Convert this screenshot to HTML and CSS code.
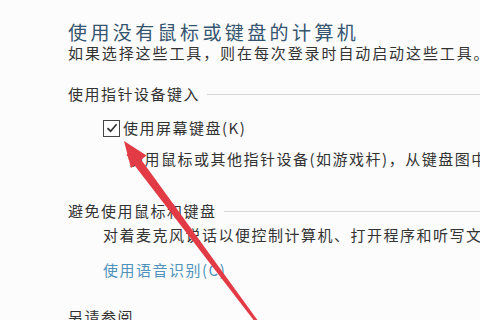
FILE: index.html
```html
<!DOCTYPE html>
<html lang="zh-CN">
<head>
    <meta charset="UTF-8">
    <meta name="viewport" content="width=device-width, initial-scale=1.0">
    <title>使用没有鼠标或键盘的计算机</title>
    <link rel="stylesheet" href="styles.css">
</head>
<body>
    <div class="page">
        <h1 class="title">使用没有鼠标或键盘的计算机</h1>
        <p class="intro">如果选择这些工具，则在每次登录时自动启动这些工具。</p>

        <div class="group group-pointer">
            <div class="group-head"><span>使用指针设备键入</span><i class="rule"></i></div>
            <label class="check-row">
                <span class="checkbox">
                    <svg width="14" height="14" viewBox="0 0 14 14"><path d="M2.5 7.2 L5.6 10.2 L11.6 3.2" fill="none" stroke="#333" stroke-width="1.7"/></svg>
                </span>
                <span>使用屏幕键盘(K)</span>
            </label>
            <p class="desc desc-indent">使用鼠标或其他指针设备(如游戏杆)，从键盘图中选择</p>
        </div>

        <div class="group group-speech">
            <div class="group-head"><span>避免使用鼠标和键盘</span><i class="rule"></i></div>
            <p class="desc">对着麦克风说话以便控制计算机、打开程序和听写文本</p>
            <a class="link" href="#">使用语音识别(C)</a>
        </div>

        <div class="group group-see">
            <div class="group-head"><span>另请参阅</span></div>
        </div>

        <!-- annotation arrow drawn over the screenshot -->
        <svg class="arrow" width="480" height="320" viewBox="0 0 480 320">
            <polygon points="133.6,149.3 126.4,154.7 255.8,322.9 258.2,321.1" fill="#e23b46"/>
            <polygon points="124,141 146.5,155.5 131,168" fill="#e23b46"/>
        </svg>
    </div>
</body>
</html>
```

FILE: styles.css
```css
body {
    margin: 0;
    background-color: #fcfcfc;
    font-family: "Noto Sans CJK SC", "Noto Sans", sans-serif;
    color: #333;
    overflow: hidden;
}

.page {
    position: relative;
    width: 480px;
    height: 320px;
    box-sizing: border-box;
    padding: 20px 0 0 68px;
    overflow: hidden;
}

.title {
    margin: 0;
    font-size: 19px;
    font-weight: 400;
    line-height: 23px;
    letter-spacing: 3.4px;
    color: #35546f;
    white-space: nowrap;
}

.intro {
    margin: 0;
    font-size: 15px;
    line-height: 19px;
    letter-spacing: 1.9px;
    white-space: nowrap;
}

.group-head {
    display: flex;
    align-items: center;
    gap: 7px;
    font-size: 15px;
    line-height: 18px;
    letter-spacing: 1.5px;
    white-space: nowrap;
}

.rule {
    flex: 1;
    border-top: 1px solid #d6d6d6;
    margin-top: 1px;
}

.group-pointer {
    margin-top: 23px;
}

.check-row {
    display: flex;
    align-items: center;
    gap: 3px;
    margin-top: 15px;
    padding-left: 35px;
    font-size: 15px;
    line-height: 20px;
    letter-spacing: 1.5px;
    white-space: nowrap;
}

.checkbox {
    display: flex;
    align-items: center;
    justify-content: center;
    width: 15px;
    height: 15px;
    border: 1.5px solid #444;
    background-color: #fff;
}

.desc {
    margin: 6px 0 0;
    padding-left: 35px;
    font-size: 15px;
    line-height: 18px;
    letter-spacing: 1.5px;
    white-space: nowrap;
}

.desc-indent {
    margin-top: 12px;
    padding-left: 60px;
}

.group-speech {
    margin-top: 34px;
}

.link {
    display: block;
    margin-top: 17px;
    padding-left: 35px;
    font-size: 15px;
    line-height: 18px;
    letter-spacing: 1.5px;
    color: #4f93bd;
    text-decoration: none;
}

.group-see {
    margin-top: 29px;
}

.arrow {
    position: absolute;
    left: 0;
    top: 0;
    pointer-events: none;
}
```
